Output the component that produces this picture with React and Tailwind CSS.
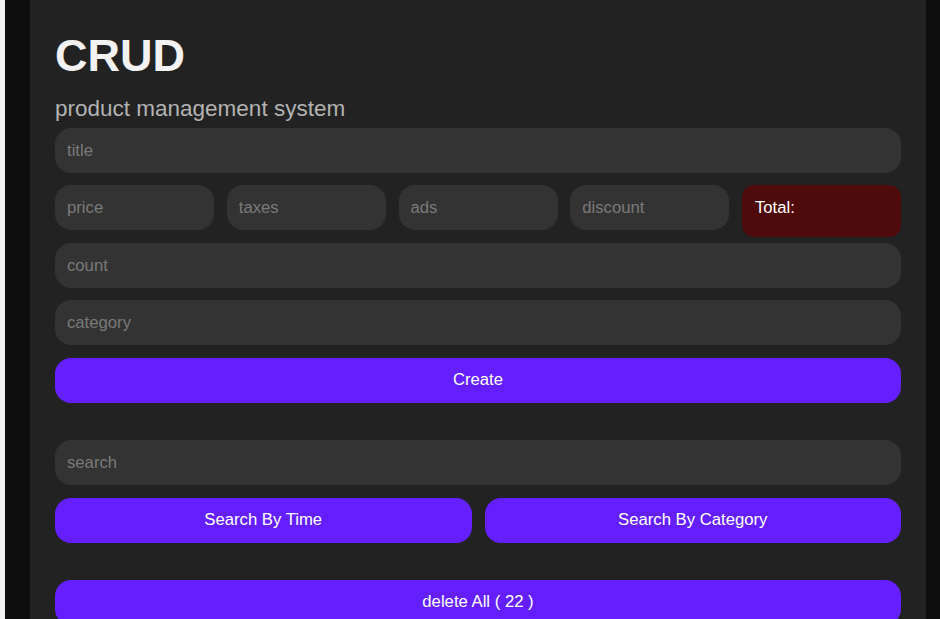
// App.jsx — CRUD product management screen (dark theme)
import { useState } from 'react'

const field =
  'w-full h-[45px] rounded-[16px] bg-[#333333] px-[12px] text-[16.7px] text-white placeholder:text-[#7a7a7a] outline-none border-none'

const purpleBtn =
  'w-full h-[45px] rounded-[16px] bg-[#651fff] text-white text-[16.7px] leading-[20px] pb-[2px] cursor-pointer'

export default function App() {
  const [count] = useState(22)

  return (
    <div className="min-h-[619px] flex bg-[#0e0e0e] font-['Liberation_Sans',Arial,sans-serif]">
      {/* thin light edge on the far left */}
      <div className="w-[5px] shrink-0 bg-[#f2f2f2]" />

      <div className="w-[896px] shrink-0 ml-[25px] bg-[#222222] px-[25px] pt-[31px] pb-[40px]">
        {/* Header */}
        <h1 className="text-[45px] leading-[50px] font-bold text-[#f2f2f2] mb-[15px]">CRUD</h1>
        <p className="text-[22.5px] leading-[25px] text-[#b3b3b3] mb-[7px]">
          product management system
        </p>

        {/* Inputs */}
        <input className={field} placeholder="title" />

        <div className="grid grid-cols-5 gap-[12.75px] items-start mt-[12px]">
          <input className={field} placeholder="price" />
          <input className={field} placeholder="taxes" />
          <input className={field} placeholder="ads" />
          <input className={field} placeholder="discount" />
          <div className="h-[52px] rounded-[12px] bg-[#4f0a0b] px-[13px] pb-[6px] flex items-center text-white text-[16.7px]">
            Total:
          </div>
        </div>

        <input className={`${field} mt-[6px]`} placeholder="count" />
        <input className={`${field} mt-[12px]`} placeholder="category" />

        <button className={`${purpleBtn} mt-[13px]`}>Create</button>

        {/* Search */}
        <input className={`${field} mt-[37px]`} placeholder="search" />

        <div className="flex gap-[13px] mt-[13px]">
          <button className={purpleBtn}>Search By Time</button>
          <button className={purpleBtn}>Search By Category</button>
        </div>

        <button className={`${purpleBtn} mt-[37px]`}>delete All ( {count} )</button>
      </div>

      <div className="flex-1" />
    </div>
  )
}
